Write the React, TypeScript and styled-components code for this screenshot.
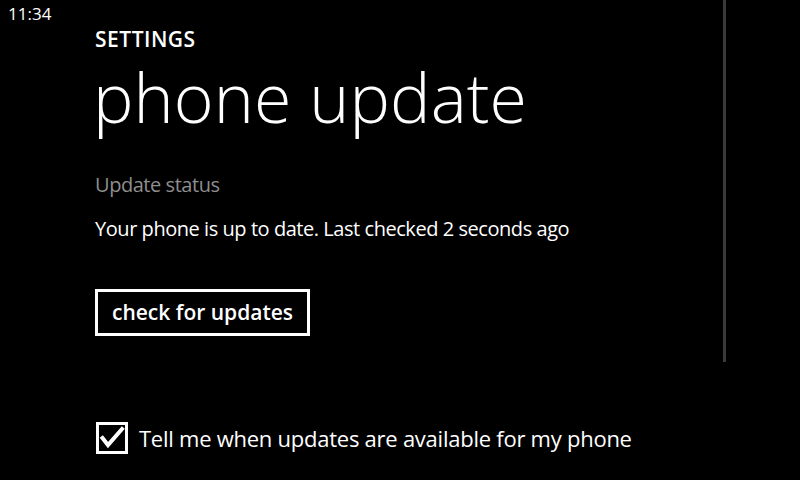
import styled, { createGlobalStyle } from 'styled-components';

const GlobalStyle = createGlobalStyle`
  html, body {
    margin: 0;
    padding: 0;
    background: #000;
  }
  body {
    font-family: "Open Sans", "Liberation Sans", sans-serif;
    color: #fff;
  }
`;

const Screen = styled.div`
  position: relative;
  width: 800px;
  height: 480px;
  background: #000;
  overflow: hidden;
  display: flex;
  flex-direction: column;
`;

const StatusBar = styled.div`
  height: 24px;
  padding: 4px 0 0 8px;
  box-sizing: border-box;
  font-size: 17px;
  line-height: 20px;
`;

const Content = styled.div`
  display: flex;
  flex-direction: column;
  align-items: flex-start;
  padding-left: 95px;
`;

const AppTitle = styled.div`
  margin-top: 5px;
  font-size: 21px;
  font-weight: 600;
  line-height: 20px;
  letter-spacing: 0.5px;
`;

const PageTitle = styled.h1`
  margin: 14px 0 0 -2px;
  font-size: 68px;
  font-weight: 300;
  line-height: 68px;
  letter-spacing: 0.1px;
`;

const Section = styled.div`
  display: flex;
  flex-direction: column;
  gap: 24px;
  margin-top: 44px;
`;

const Label = styled.div<{ $muted?: boolean }>`
  font-size: 20px;
  line-height: 20px;
  letter-spacing: -0.45px;
  color: ${p => (p.$muted ? '#8e8e8e' : '#fff')};
`;

const OutlineButton = styled.button`
  margin-top: 50px;
  height: 47px;
  padding: 0 14px;
  box-sizing: border-box;
  background: #000;
  border: 3px solid #fff;
  color: #fff;
  font-family: inherit;
  font-size: 21px;
  font-weight: 600;
  line-height: 21px;
`;

const CheckRow = styled.label`
  display: flex;
  align-items: center;
  gap: 11px;
  margin-top: 86px;
  margin-left: 1px;
  font-size: 22px;
  line-height: 32px;
  letter-spacing: -0.25px;
`;

const CheckBox = styled.span`
  width: 32px;
  height: 32px;
  box-sizing: border-box;
  border: 3px solid #fff;
  display: flex;
  align-items: center;
  justify-content: center;
`;

const ScrollIndicator = styled.div`
  position: absolute;
  left: 723px;
  top: 0;
  width: 3px;
  height: 362px;
  background: #3a3a3a;
`;

export default function App() {
  return (
    <Screen>
      <GlobalStyle />
      <StatusBar>11:34</StatusBar>
      <Content>
        <AppTitle>SETTINGS</AppTitle>
        <PageTitle>phone update</PageTitle>
        <Section>
          <Label $muted>Update status</Label>
          <Label>Your phone is up to date. Last checked 2 seconds ago</Label>
        </Section>
        <OutlineButton type="button">check for updates</OutlineButton>
        <CheckRow>
          <CheckBox>
            <svg width="26" height="26" viewBox="0 0 26 26">
              <path d="M3.5 13 L9 20 L23 4" fill="none" stroke="#fff" strokeWidth="4" strokeLinecap="square" />
            </svg>
          </CheckBox>
          Tell me when updates are available for my phone
        </CheckRow>
      </Content>
      <ScrollIndicator />
    </Screen>
  );
}
